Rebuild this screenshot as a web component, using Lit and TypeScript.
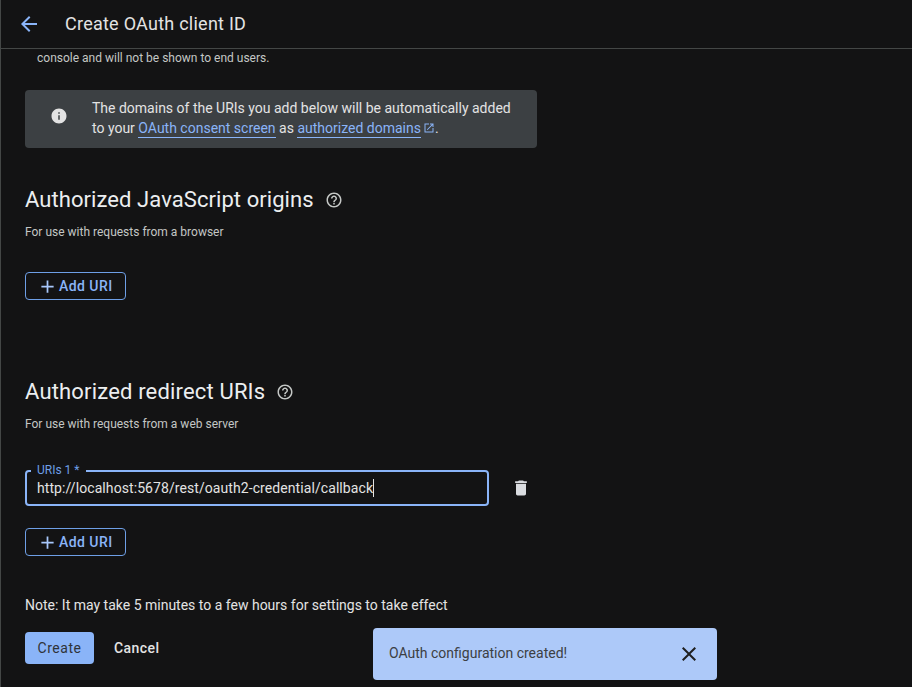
import { LitElement, html, css } from 'lit';
import { customElement } from 'lit/decorators.js';

const helpIcon = html`<svg class="help" viewBox="0 0 24 24" width="18" height="18" fill="#c4c7c5"><path d="M11 18h2v-2h-2v2zm1-16C6.480 2 2 6.480 2 12s4.480 10 10 10 10-4.480 10-10S17.520 2 12 2zm0 18c-4.410 0-8-3.590-8-8s3.590-8 8-8 8 3.590 8 8-3.590 8-8 8zm0-14c-2.210 0-4 1.790-4 4h2c0-1.100.9-2 2-2s2 .9 2 2c0 2-3 1.750-3 5h2c0-2.250 3-2.500 3-5 0-2.210-1.790-4-4-4z"/></svg>`;

const plusIcon = html`<svg viewBox="0 0 24 24" width="21" height="21" fill="#a8c7fa"><path d="M19 13h-6v6h-2v-6H5v-2h6V5h2v6h6v2z"/></svg>`;

@customElement('app-root')
export class AppRoot extends LitElement {
  static styles = css`
    :host {
      display: block;
      position: relative;
      height: 687px;
      overflow: hidden;
      background: #131314;
      border-left: 1px solid #444746;
      box-sizing: border-box;
      font-family: Roboto, "Liberation Sans", sans-serif;
      color: #e3e3e3;
    }
    header {
      display: flex;
      align-items: center;
      height: 48px;
      border-bottom: 1px solid #444746;
      padding-left: 16px;
    }
    .back {
      display: block;
      width: 24px;
      height: 24px;
      margin-right: 24px;
    }
    h1 {
      margin: 0;
      font-size: 18px;
      line-height: 24px;
      font-weight: 400;
      letter-spacing: 0.25px;
    }
    main {
      padding: 1px 0 0 24px;
    }
    .clipped {
      margin: 0 0 0 12px;
      font-size: 12px;
      line-height: 16px;
      color: #c4c7c5;
    }
    .notice {
      display: flex;
      align-items: flex-start;
      box-sizing: border-box;
      width: 512px;
      height: 58px;
      margin-top: 24px;
      padding: 8px 16px 0 0;
      background: #3c4043;
      border-radius: 4px;
      font-size: 14px;
      line-height: 20px;
    }
    .notice svg.info {
      flex: none;
      margin: 9px 24px 0 25px;
    }
    .notice a {
      color: #8ab4f8;
      text-decoration: none;
      padding-bottom: 1px;
      border-bottom: 1px solid #8ab4f8;
    }
    .notice .ext {
      vertical-align: -1px;
      margin-left: 2px;
    }
    h2 {
      display: flex;
      align-items: center;
      margin: 0;
      font-size: 22px;
      line-height: 28px;
      font-weight: 400;
      letter-spacing: 0.07px;
      color: #eceef0;
    }
    h2 .help {
      margin-left: 11px;
    }
    .origins {
      margin-top: 38px;
    }
    .redirects {
      margin-top: 78px;
    }
    .redirects h2 {
      letter-spacing: 0.17px;
    }
    .sub {
      margin: 10px 0 0;
      font-size: 12px;
      line-height: 16px;
      color: #c4c7c5;
    }
    .add {
      display: flex;
      align-items: center;
      gap: 1px;
      box-sizing: border-box;
      width: 101px;
      height: 28px;
      padding: 0 0 0 11px;
      background: none;
      border: 1px solid #6e9fe6;
      border-radius: 4px;
      color: #8ab4f8;
      font: 500 14px/20px Roboto, "Liberation Sans", sans-serif;
      letter-spacing: 0.45px;
    }
    .origins .add {
      margin-top: 32px;
    }
    .uri-row {
      display: flex;
      align-items: center;
      margin-top: 38px;
    }
    .field {
      position: relative;
      box-sizing: border-box;
      width: 464px;
      height: 36px;
      padding: 6px 10px 0;
      border: 2px solid #8ab4f8;
      border-radius: 4px;
      font-size: 14px;
      line-height: 20px;
      letter-spacing: 0.08px;
      white-space: nowrap;
    }
    .field label {
      position: absolute;
      left: 4px;
      top: -10px;
      padding: 0 6px;
      background: #131314;
      font-size: 12px;
      line-height: 16px;
      letter-spacing: 0;
      color: #6e9fe6;
    }
    .field .caret {
      display: inline-block;
      width: 1px;
      height: 18px;
      vertical-align: -4px;
      background: #e3e3e3;
    }
    .trash {
      display: block;
      margin-left: 22px;
    }
    .uri-row + .add {
      margin-top: 22px;
    }
    .note {
      margin: 39px 0 0;
      font-size: 14px;
      line-height: 20px;
    }
    .actions {
      display: flex;
      align-items: center;
      margin-top: 17px;
    }
    .create {
      box-sizing: border-box;
      width: 69px;
      height: 32px;
      padding: 0;
      border: none;
      border-radius: 4px;
      background: #8ab4f8;
      color: #2f3338;
      font: 400 14px/20px Roboto, "Liberation Sans", sans-serif;
      letter-spacing: 0.5px;
    }
    .cancel {
      margin-left: 20px;
      font-size: 14px;
      line-height: 20px;
      font-weight: 500;
      letter-spacing: 0.45px;
      color: #e3e3e3;
    }
    .toast {
      position: absolute;
      left: 372px;
      top: 628px;
      box-sizing: border-box;
      display: flex;
      align-items: center;
      justify-content: space-between;
      width: 344px;
      height: 52px;
      padding: 0 16px;
      background: #adc9f9;
      border-radius: 4px;
      color: #3c4043;
      font-size: 14px;
      line-height: 20px;
    }
    .toast span {
      padding-bottom: 2px;
    }
    .toast svg {
      display: block;
    }
  `;

  render() {
    return html`
      <header>
        <svg class="back" viewBox="0 0 24 24" fill="#8ab4f8"><path d="M20 11H7.830l5.590-5.590L12 4l-8 8 8 8 1.410-1.410L7.830 13H20v-2z"/></svg>
        <h1>Create OAuth client ID</h1>
      </header>
      <main>
        <p class="clipped">console and will not be shown to end users.</p>
        <div class="notice">
          <svg class="info" viewBox="0 0 24 24" width="18" height="18" fill="#e3e3e3"><path d="M12 2C6.480 2 2 6.480 2 12s4.480 10 10 10 10-4.480 10-10S17.520 2 12 2zm1 15h-2v-6h2v6zm0-8h-2V7h2v2z"/></svg>
          <div>
            The domains of the URIs you add below will be automatically added<br />
            to your <a>OAuth consent screen</a> as <a>authorized domains</a><svg class="ext" viewBox="0 0 24 24" width="12" height="12" fill="#8ab4f8"><path d="M19 19H5V5h7V3H3v18h18v-9h-2v7zM14 3v2h3.590l-9.830 9.830 1.410 1.410L19 6.410V10h2V3h-7z"/></svg>.
          </div>
        </div>
        <section class="origins">
          <h2>Authorized JavaScript origins ${helpIcon}</h2>
          <p class="sub">For use with requests from a browser</p>
          <button class="add">${plusIcon}Add URI</button>
        </section>
        <section class="redirects">
          <h2>Authorized redirect URIs ${helpIcon}</h2>
          <p class="sub">For use with requests from a web server</p>
          <div class="uri-row">
            <div class="field">
              <label>URIs 1 *</label>
              http://localhost:5678/rest/oauth2-credential/callback<span class="caret"></span>
            </div>
            <svg class="trash" viewBox="0 0 24 24" width="20" height="20" fill="#dadce0"><path d="M6 19c0 1.100.9 2 2 2h8c1.100 0 2-.9 2-2V7H6v12zM19 4h-3.500l-1-1h-5l-1 1H5v2h14V4z"/></svg>
          </div>
          <button class="add">${plusIcon}Add URI</button>
        </section>
        <p class="note">Note: It may take 5 minutes to a few hours for settings to take effect</p>
        <div class="actions">
          <button class="create">Create</button>
          <span class="cancel">Cancel</span>
        </div>
      </main>
      <div class="toast">
        <span>OAuth configuration created!</span>
        <svg viewBox="0 0 24 24" width="24" height="24" fill="#1f1f1f"><path d="M19 6.410 17.590 5 12 10.590 6.410 5 5 6.410 10.590 12 5 17.590 6.410 19 12 13.410 17.590 19 19 17.590 13.410 12z"/></svg>
      </div>
    `;
  }
}
